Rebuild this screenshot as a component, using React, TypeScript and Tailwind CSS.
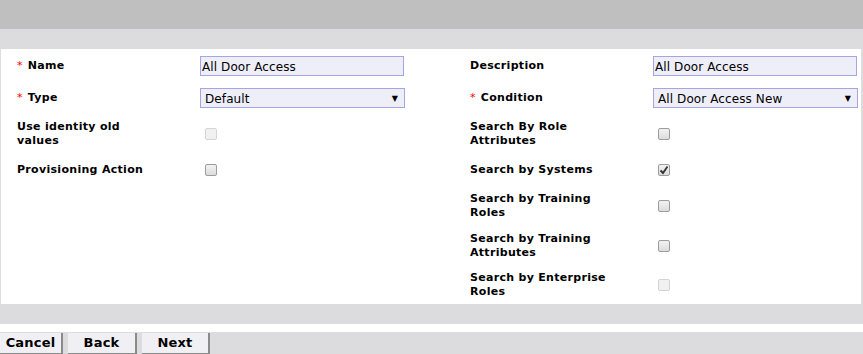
import React from "react";

const font = { fontFamily: '"DejaVu Sans", Verdana, sans-serif' };

function Star() {
  return <span className="text-[#ff0000] mr-[5px] font-normal">*</span>;
}

function Label({ children, req }: { children: React.ReactNode; req?: boolean }) {
  return (
    <div className="w-[183px] shrink-0 flex items-center">
      <div className="max-w-[145px] text-[11px] leading-[14px] font-bold tracking-[0.3px] text-black">
        {req && <Star />}
        {children}
      </div>
    </div>
  );
}

function TextInput({ value, w }: { value: string; w: string }) {
  return (
    <div className={`${w} h-[20px] border border-[#a6a4e2] bg-[#eeeef8] flex items-center pl-[1px] pt-[1px] text-[12px] tracking-[0.1px] text-black`}>
      {value}
    </div>
  );
}

function Select({ value, w }: { value: string; w: string }) {
  return (
    <div className={`${w} h-[20px] border border-[#a6a4e2] bg-[#eeeef8] flex items-center justify-between pl-[4px] pr-[6px] pt-[1px] text-[12px] tracking-[0.1px] text-black`}>
      <span>{value}</span>
      <span className="text-[8px] leading-none">▼</span>
    </div>
  );
}

function Check({ checked, disabled }: { checked?: boolean; disabled?: boolean }) {
  return (
    <div
      className={`ml-[5px] w-[12px] h-[12px] rounded-[2px] border flex items-center justify-center ${
        disabled ? "border-[#d4d4d4] bg-[#f1f1f1]" : "border-[#9c9c9c] bg-gradient-to-b from-[#f2f2f2] to-[#dcdcdc]"
      }`}
    >
      {checked && (
        <svg width="10" height="10" viewBox="0 0 10 10">
          <path d="M1.5 5.5 L4 8 L8.5 1.5" stroke="#333" strokeWidth="1.8" fill="none" />
        </svg>
      )}
    </div>
  );
}

function Row({ h, children }: { h: string; children: React.ReactNode }) {
  return <div className={`flex ${h}`}>{children}</div>;
}

function Ctrl({ w, children }: { w: string; children?: React.ReactNode }) {
  return <div className={`${w} shrink-0 flex items-center`}>{children}</div>;
}

export default function App() {
  return (
    <div className="w-[863px] h-[354px] bg-white overflow-hidden" style={font}>
      <div className="h-[29px] bg-[#bfbfbf]" />
      <div className="h-[20px] bg-[#dcdbde]" />
      <div className="h-[255px] border-l border-r-[2px] border-[#dcdbde] bg-white pl-[16px] pt-[1px]">
        <Row h="h-[32px]">
          <Label req>Name</Label>
          <Ctrl w="w-[270px]"><TextInput value="All Door Access" w="w-[204px]" /></Ctrl>
          <Label>Description</Label>
          <Ctrl w="w-[205px]"><TextInput value="All Door Access" w="w-[204px]" /></Ctrl>
        </Row>
        <Row h="h-[32px]">
          <Label req>Type</Label>
          <Ctrl w="w-[270px]"><Select value="Default" w="w-[205px]" /></Ctrl>
          <Label req>Condition</Label>
          <Ctrl w="w-[205px]"><Select value="All Door Access New" w="w-[206px]" /></Ctrl>
        </Row>
        <Row h="h-[40px]">
          <Label>Use identity old values</Label>
          <Ctrl w="w-[270px]"><Check disabled /></Ctrl>
          <Label>Search By Role Attributes</Label>
          <Ctrl w="w-[205px]"><Check /></Ctrl>
        </Row>
        <Row h="h-[32px]">
          <Label>Provisioning Action</Label>
          <Ctrl w="w-[270px]"><Check /></Ctrl>
          <Label>Search by Systems</Label>
          <Ctrl w="w-[205px]"><Check checked /></Ctrl>
        </Row>
        <Row h="h-[40px]">
          <div className="w-[453px]" />
          <Label>Search by Training Roles</Label>
          <Ctrl w="w-[205px]"><Check /></Ctrl>
        </Row>
        <Row h="h-[40px]">
          <div className="w-[453px]" />
          <Label>Search by Training Attributes</Label>
          <Ctrl w="w-[205px]"><Check /></Ctrl>
        </Row>
        <Row h="h-[38px]">
          <div className="w-[453px]" />
          <Label>Search by Enterprise Roles</Label>
          <Ctrl w="w-[205px]"><Check disabled /></Ctrl>
        </Row>
      </div>
      <div className="h-[20px] bg-[#dcdbde]" />
      <div className="h-[8px] bg-white" />
      <div className="h-[22px] bg-[#dcdbde] flex gap-[5px] items-stretch">
        {[
          ["Cancel", "w-[63px]"],
          ["Back", "w-[69px]"],
          ["Next", "w-[68px]"],
        ].map(([t, w]) => (
          <div
            key={t}
            className={`${w} mt-[1px] bg-[#f0f0f4] border-r-2 border-b border-[#8a8a8a] flex items-center justify-center text-[13px] font-bold tracking-[0.2px] text-black`}
          >
            {t}
          </div>
        ))}
      </div>
    </div>
  );
}
